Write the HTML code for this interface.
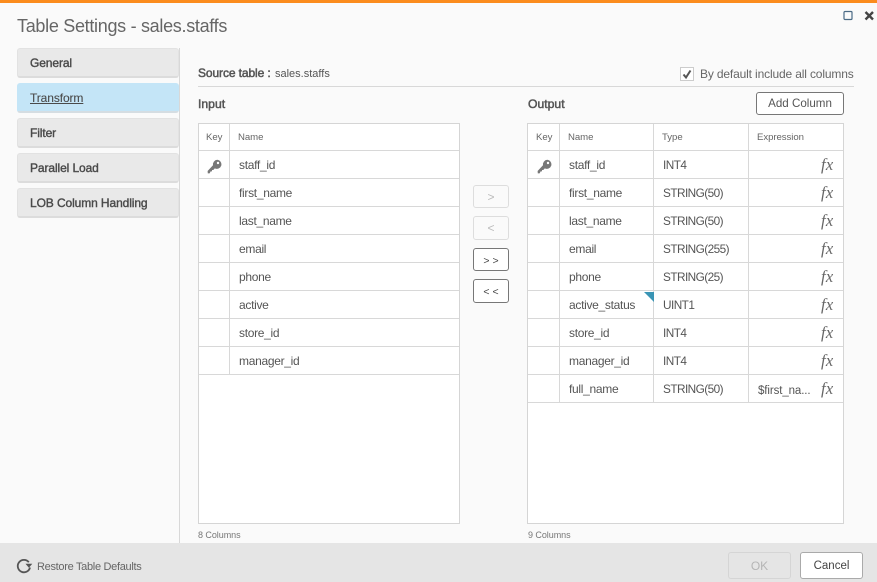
<!DOCTYPE html>
<html><head><meta charset="utf-8">
<style>
html,body{margin:0;padding:0;width:877px;height:582px;overflow:hidden;background:#fafafa;font-family:"Liberation Sans",sans-serif;color:#555}
.a{position:absolute;white-space:nowrap}
.l{position:absolute;background:#d8d8d8}
.nav{position:absolute;left:17px;width:160px;background:#e9e9e9;border:1px solid #e2e2e2;border-bottom:2px solid #dcdcdc;border-radius:3px;box-sizing:content-box;height:27px;font-size:12px;color:#4a4a4a;-webkit-text-stroke:.4px #4a4a4a;line-height:28px;text-indent:12px;letter-spacing:-.1px}
.t{font-size:12px;color:#555;line-height:16px;letter-spacing:-.3px}
.y{letter-spacing:-.55px;font-size:11.8px}
.h{font-size:9.6px;color:#666;line-height:12px;letter-spacing:-.05px}
.fx{position:absolute;left:821px;font-family:"Liberation Serif",serif;font-style:italic;font-size:16.5px;color:#666;line-height:16px;letter-spacing:.3px}
.b{position:absolute;box-sizing:border-box;border:1px solid #777;border-radius:3px;background:#fff;text-align:center;color:#444;font-size:12px}
.d{border-color:#ddd;background:#fafafa;color:#bbb}
</style></head><body>
<div class="a" style="left:0;top:0;width:877px;height:3px;background:#fb8c1e"></div>
<div class="a" style="left:17px;top:15px;font-size:18px;line-height:22px;color:#666;letter-spacing:-.3px">Table Settings - sales.staffs</div>
<svg class="a" style="left:843px;top:10px" width="34" height="12" viewBox="0 0 34 12"><rect x="1" y="1.5" width="8" height="8" rx="1" fill="none" stroke="#4a6a85" stroke-width="1.2"/><path d="M22.5 2l7.5 7.5M30 2l-7.5 7.5" stroke="#444" stroke-width="2.4" fill="none"/></svg>

<div class="nav" style="top:48px">General</div>
<div class="nav" style="top:83px;background:#c4e5f7;border-color:#c4e5f7 #c4e5f7 #d5dde2;-webkit-text-stroke:.1px #4a4a4a"><span style="text-decoration:underline">Transform</span></div>
<div class="nav" style="top:118px">Filter</div>
<div class="nav" style="top:153px">Parallel Load</div>
<div class="nav" style="top:188px">LOB Column Handling</div>
<div class="l" style="left:179px;top:48px;width:1px;height:495px"></div>

<div class="a" style="left:198px;top:65px;font-size:12px;line-height:16px;color:#555"><span style="-webkit-text-stroke:.5px #555;letter-spacing:-.1px">Source table :</span> <span style="font-size:11px;margin-left:1px">sales.staffs</span></div>
<div class="l" style="left:198px;top:86px;width:656px;height:1px"></div>
<div class="a" style="left:680px;top:67px;width:14px;height:14px;box-sizing:border-box;border:1px solid #ccc;background:#fff"></div>
<svg class="a" style="left:680px;top:67px" width="14" height="14"><path d="M3.5 7.5l2.5 3 4.5-7" stroke="#555" stroke-width="2" fill="none"/></svg>
<div class="a" style="left:700px;top:66px;font-size:12px;line-height:16px;color:#666;letter-spacing:-.15px">By default include all columns</div>
<div class="a" style="left:198px;top:96px;font-size:12.2px;-webkit-text-stroke:.5px #555;line-height:16px;color:#555">Input</div>
<div class="a" style="left:528px;top:96px;font-size:12.2px;-webkit-text-stroke:.5px #555;line-height:16px;color:#555">Output</div>
<div class="b" style="left:756px;top:92px;width:88px;height:23px;line-height:22px;font-size:11.6px;color:#555">Add Column</div>

<!-- input table -->
<div class="a" style="left:198px;top:123px;width:262px;height:401px;box-sizing:border-box;background:#fff;border:1px solid #d5d5d5"></div>
<div class="l" style="left:229px;top:124px;width:1px;height:250px"></div>
<div class="l" style="left:199px;top:150px;width:260px;height:1px"></div>
<div class="l" style="left:199px;top:178px;width:260px;height:1px"></div>
<div class="l" style="left:199px;top:206px;width:260px;height:1px"></div>
<div class="l" style="left:199px;top:234px;width:260px;height:1px"></div>
<div class="l" style="left:199px;top:262px;width:260px;height:1px"></div>
<div class="l" style="left:199px;top:290px;width:260px;height:1px"></div>
<div class="l" style="left:199px;top:318px;width:260px;height:1px"></div>
<div class="l" style="left:199px;top:346px;width:260px;height:1px"></div>
<div class="l" style="left:199px;top:374px;width:260px;height:1px"></div>
<div class="a h" style="left:206px;top:132px">Key</div>
<div class="a h" style="left:238px;top:132px">Name</div>
<svg class="a" style="left:207px;top:159px" width="16" height="16" viewBox="0 0 16 16"><path d="M10.2.8a4.6 4.6 0 0 1 4 6 4.6 4.6 0 0 1-6.4 2.6L6.3 11H5v1.4H3.6l-1 2H.8L.6 12 6 6.2A4.6 4.6 0 0 1 10.2.8z" fill="#777"/><circle cx="11" cy="4" r="1.2" fill="#fff"/></svg>
<div class="a t" style="left:239px;top:157px">staff_id</div>
<div class="a t" style="left:239px;top:185px">first_name</div>
<div class="a t" style="left:239px;top:213px">last_name</div>
<div class="a t" style="left:239px;top:241px">email</div>
<div class="a t" style="left:239px;top:269px">phone</div>
<div class="a t" style="left:239px;top:297px">active</div>
<div class="a t" style="left:239px;top:325px">store_id</div>
<div class="a t" style="left:239px;top:353px">manager_id</div>
<div class="a" style="left:198px;top:529px;font-size:9px;line-height:12px;color:#777;letter-spacing:-.05px">8 Columns</div>

<!-- buttons -->
<div class="b d" style="left:473px;top:185px;width:36px;height:23px;line-height:22px">&gt;</div>
<div class="b d" style="left:473px;top:216px;width:36px;height:24px;line-height:23px">&lt;</div>
<div class="b" style="left:473px;top:248px;width:36px;height:23px;line-height:24px;font-size:10.5px">&gt; &gt;</div>
<div class="b" style="left:473px;top:279px;width:36px;height:24px;line-height:24px;font-size:10.5px">&lt; &lt;</div>

<!-- output table -->
<div class="a" style="left:527px;top:123px;width:317px;height:401px;box-sizing:border-box;background:#fff;border:1px solid #d5d5d5"></div>
<div class="l" style="left:559px;top:124px;width:1px;height:278px"></div>
<div class="l" style="left:653px;top:124px;width:1px;height:278px"></div>
<div class="l" style="left:748px;top:124px;width:1px;height:278px"></div>
<div class="l" style="left:528px;top:150px;width:315px;height:1px"></div>
<div class="l" style="left:528px;top:178px;width:315px;height:1px"></div>
<div class="l" style="left:528px;top:206px;width:315px;height:1px"></div>
<div class="l" style="left:528px;top:234px;width:315px;height:1px"></div>
<div class="l" style="left:528px;top:262px;width:315px;height:1px"></div>
<div class="l" style="left:528px;top:290px;width:315px;height:1px"></div>
<div class="l" style="left:528px;top:318px;width:315px;height:1px"></div>
<div class="l" style="left:528px;top:346px;width:315px;height:1px"></div>
<div class="l" style="left:528px;top:374px;width:315px;height:1px"></div>
<div class="l" style="left:528px;top:402px;width:315px;height:1px"></div>
<div class="a h" style="left:536px;top:132px">Key</div>
<div class="a h" style="left:568px;top:132px">Name</div>
<div class="a h" style="left:662px;top:132px">Type</div>
<div class="a h" style="left:757px;top:132px">Expression</div>
<svg class="a" style="left:537px;top:159px" width="16" height="16" viewBox="0 0 16 16"><path d="M10.2.8a4.6 4.6 0 0 1 4 6 4.6 4.6 0 0 1-6.4 2.6L6.3 11H5v1.4H3.6l-1 2H.8L.6 12 6 6.2A4.6 4.6 0 0 1 10.2.8z" fill="#777"/><circle cx="11" cy="4" r="1.2" fill="#fff"/></svg>
<div class="a t" style="left:569px;top:157px">staff_id</div><div class="a t y" style="left:663px;top:157px">INT4</div><div class="fx" style="top:157px">fx</div>
<div class="a t" style="left:569px;top:185px">first_name</div><div class="a t y" style="left:663px;top:185px">STRING(50)</div><div class="fx" style="top:185px">fx</div>
<div class="a t" style="left:569px;top:213px">last_name</div><div class="a t y" style="left:663px;top:213px">STRING(50)</div><div class="fx" style="top:213px">fx</div>
<div class="a t" style="left:569px;top:241px">email</div><div class="a t y" style="left:663px;top:241px">STRING(255)</div><div class="fx" style="top:241px">fx</div>
<div class="a t" style="left:569px;top:269px">phone</div><div class="a t y" style="left:663px;top:269px">STRING(25)</div><div class="fx" style="top:269px">fx</div>
<div class="a t" style="left:569px;top:297px">active_status</div><div class="a t y" style="left:663px;top:297px">UINT1</div><div class="fx" style="top:297px">fx</div>
<svg class="a" style="left:644px;top:292px" width="10" height="10"><path d="M0 0h10v10z" fill="#3a95b5"/></svg>
<div class="a t" style="left:569px;top:325px">store_id</div><div class="a t y" style="left:663px;top:325px">INT4</div><div class="fx" style="top:325px">fx</div>
<div class="a t" style="left:569px;top:353px">manager_id</div><div class="a t y" style="left:663px;top:353px">INT4</div><div class="fx" style="top:353px">fx</div>
<div class="a t" style="left:569px;top:381px">full_name</div><div class="a t y" style="left:663px;top:381px">STRING(50)</div><div class="a t" style="left:758px;top:383px;font-size:11.5px;letter-spacing:-.1px">$first_na...</div><div class="fx" style="top:381px">fx</div>
<div class="a" style="left:528px;top:529px;font-size:9px;line-height:12px;color:#777;letter-spacing:-.05px">9 Columns</div>

<!-- footer -->
<div class="a" style="left:0;top:543px;width:877px;height:39px;background:#e5e5e5"></div>
<svg class="a" style="left:16px;top:558px" width="17" height="16" viewBox="0 0 17 16"><path d="M12.8 4.2A6.2 6.2 0 1 0 14 9.5" fill="none" stroke="#555" stroke-width="1.8"/><path d="M9.5 5.8h6.8l-3.4 4z" fill="#555"/></svg>
<div class="a" style="left:37px;top:559px;font-size:11px;line-height:16px;color:#666;letter-spacing:-.3px">Restore Table Defaults</div>
<div class="b" style="left:728px;top:552px;width:63px;height:27px;line-height:26px;background:#e5e5e5;border-color:#d5d5d5;color:#b5b5b5">OK</div>
<div class="b" style="left:800px;top:552px;width:63px;height:27px;line-height:27px;border-color:#aaa;color:#444;font-size:11.5px">Cancel</div>
</body></html>
